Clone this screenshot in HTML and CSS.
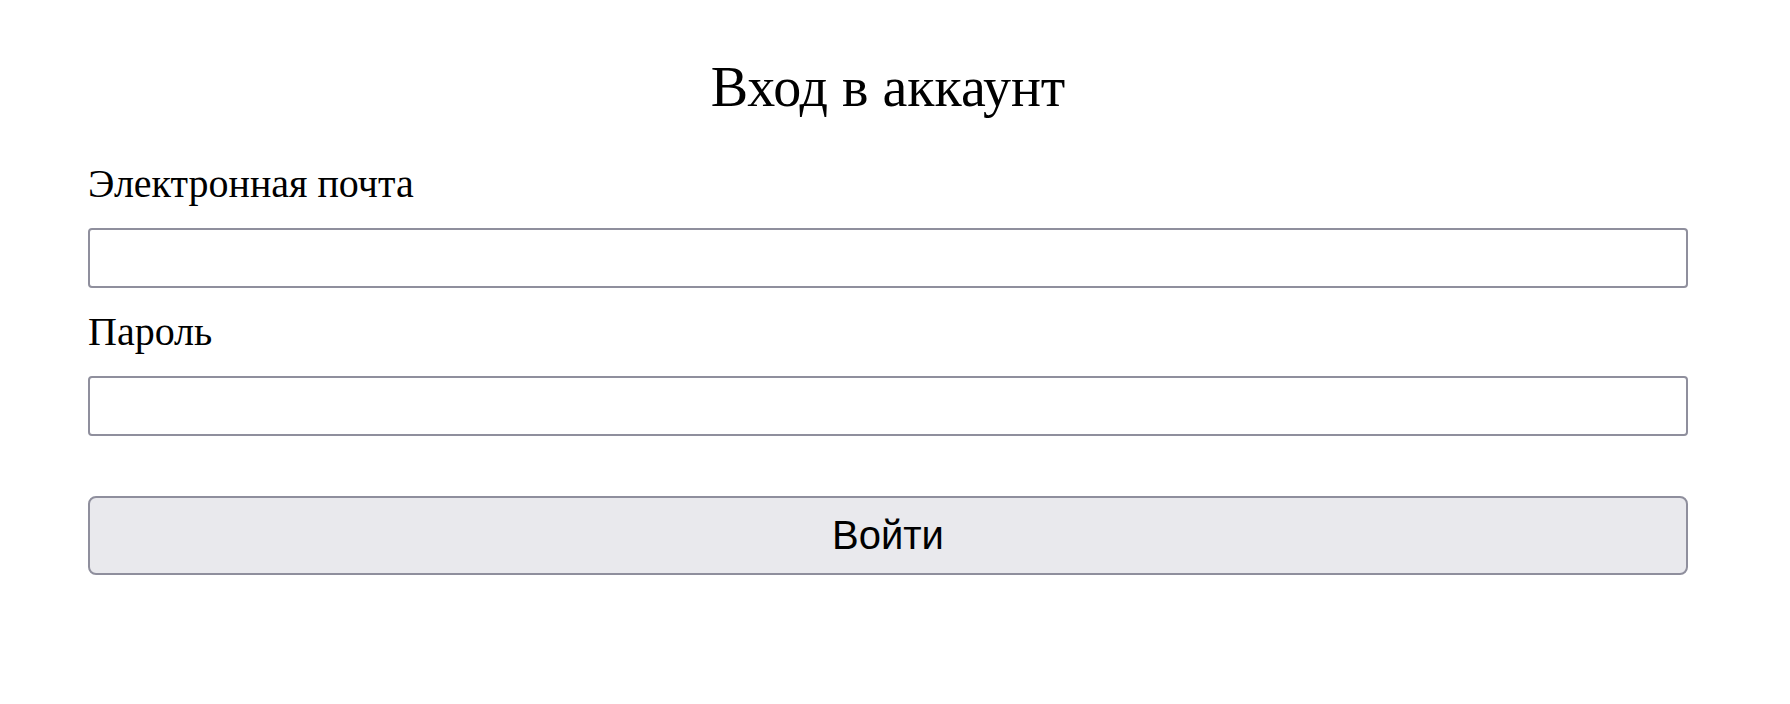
FILE: index.html
```html
<!DOCTYPE html>
<html lang="ru">
<head>
<meta charset="utf-8">
<title>Вход в аккаунт</title>
<link rel="stylesheet" href="styles.css">
</head>
<body>
<main class="page">
  <h1 class="title">Вход в аккаунт</h1>
  <form class="form">
    <label class="label" for="email">Электронная почта</label>
    <input class="field" id="email" type="email">
    <label class="label label-second" for="password">Пароль</label>
    <input class="field" id="password" type="password">
    <button class="submit" type="button">Войти</button>
  </form>
</main>
</body>
</html>
```

FILE: styles.css
```css
html, body {
  margin: 0;
  padding: 0;
  background: #ffffff;
}

.page {
  width: 1600px;
  padding: 57px 0 0 88px;
  font-family: "Liberation Serif", "Times New Roman", serif;
  color: #000;
}

.title {
  margin: 0;
  font-size: 56px;
  line-height: 60px;
  font-weight: normal;
  text-align: center;
}

.form {
  display: flex;
  flex-direction: column;
  margin-top: 43px;
}

.label {
  font-size: 40px;
  line-height: 48px;
  margin-bottom: 20px;
}

.label-second {
  margin-top: 20px;
}

.field {
  box-sizing: border-box;
  width: 100%;
  height: 60px;
  margin: 0;
  border: 2px solid #8f8f9d;
  border-radius: 4px;
  background: #ffffff;
  font-size: 32px;
  padding: 0 8px;
}

.submit {
  box-sizing: border-box;
  width: 100%;
  height: 79px;
  margin-top: 60px;
  border: 2px solid #8f8f9d;
  border-radius: 8px;
  background: #e9e9ed;
  color: #000;
  font-family: "Liberation Sans", Arial, sans-serif;
  font-size: 40px;
  padding: 0;
}
```
